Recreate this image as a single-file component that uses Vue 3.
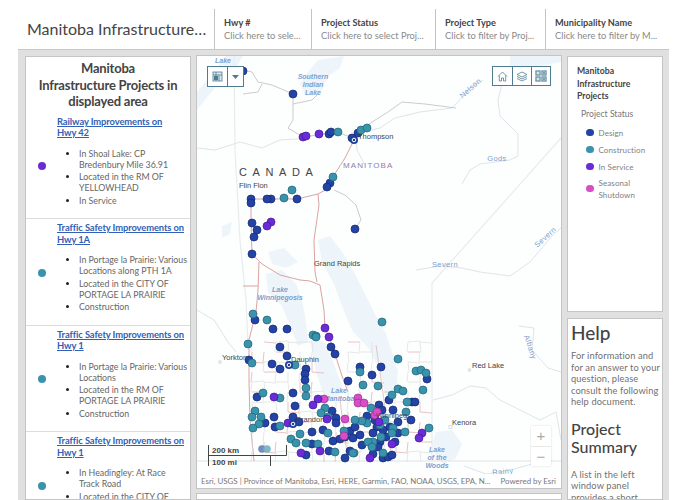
<template>
  <div class="page">
    <header class="topbar">
      <div class="app-title">Manitoba Infrastructure…</div>
      <div v-for="f in filters" :key="f.label" class="filter" :style="{ width: f.width + 'px' }">
        <div class="filter-label">{{ f.label }}</div>
        <div class="filter-hint">{{ f.hint }}</div>
      </div>
    </header>

    <main class="content">
      <aside class="list-panel">
        <h2 class="list-title">Manitoba<br />Infrastructure Projects in<br />displayed area</h2>
        <div v-for="(p, i) in projects" :key="i" class="project">
          <div class="project-dot-col">
            <span class="dot" :style="{ background: colors[p.status].fill }"></span>
          </div>
          <div class="project-body">
            <a class="project-link" href="#">{{ p.title }}</a>
            <ul class="project-facts">
              <li v-for="fact in p.facts" :key="fact">{{ fact }}</li>
            </ul>
          </div>
        </div>
      </aside>

      <section class="middle">
        <div class="map">
          <svg class="map-canvas" viewBox="197 56 364 432" width="364" height="432">
            <rect x="197" y="56" width="364" height="432" fill="#fdfefe" />

            <!-- water -->
            <g fill="#edf5fb">
              <path d="M226 56L243 56L236 68L222 80L208 96L197 110L197 92L212 74Z" />
              <path d="M318 60L344 56L340 68L328 76L322 90L306 96L300 84L308 72Z" />
              <path d="M510 56L561 56L561 62L540 66L510 66Z" />
              <path d="M318 240L330 236L342 252L354 272L366 296L377 318L386 334L392 352L398 372L396 394L386 398L380 372L370 350L352 330L342 306L334 284L322 262Z" />
              <path d="M266 274L282 270L296 284L302 300L306 322L308 342L298 346L290 326L282 306L268 292Z" />
              <path d="M268 252L284 248L298 262L286 268L272 264Z" />
              <path d="M310 338L324 342L334 364L342 386L336 402L324 396L316 372L312 352Z" />
              <path d="M436 432L452 430L462 444L456 458L444 464L436 456L432 444Z" />
              <path d="M222 226L232 222L230 234L222 238Z" />
            </g>

            <!-- province and state borders -->
            <g fill="none" stroke="#e8ecef" stroke-width="1.2">
              <path d="M234 56L235 150L240 240L246 300L248 345" />
              <path d="M561 138L497 210L432 283L432 461" />
              <path d="M197 461L561 461" stroke="#dfe3e6" />
            </g>

            <!-- rivers -->
            <g fill="none" stroke="#dde5ea" stroke-width="1">
              <path d="M483 80L470 88L458 102L452 108L420 112L395 118L380 128L362 132" />
              <path d="M503 80L498 100L500 116L518 134L518 156L510 160L480 164L470 170L462 184" />
              <path d="M197 148L215 150L240 142L262 148L280 140L310 138" />
              <path d="M416 270L440 266L462 268L480 272L510 276L530 262L552 236L561 228" />
              <path d="M519 326L534 328L532 350L548 368L561 372" />
              <path d="M433 400L452 395L470 386L486 388L500 400L520 410L540 420L556 412L561 440" />
              <path d="M464 466L486 474L510 470L540 462" />
              <path d="M197 310L214 320L228 342L236 352" />
              <path d="M365 165L357 150L356 135" />
            </g>

            <!-- northern roads -->
            <g fill="none" stroke="#c9c4c4" stroke-width="0.9">
              <path d="M243 70L252 72L258 82L272 85L293 94L293 120L288 128L298 134L303 137" />
              <path d="M243 94L258 92L262 84" />
              <path d="M293 104L312 100L318 94" />
              <path d="M303 137L338 132L352 138" />
              <path d="M354 136L372 122L388 112L402 102L425 104L456 108" />
              <path d="M334 190L345 195L356 205L361 220L355 229" />
            </g>

            <!-- highways -->
            <g fill="none" stroke="#dca3a3" stroke-width="1">
              <path d="M354 140L345 158L336 172L329 188L318 194L297 199L251 199L248 198" />
              <path d="M251 199L251 222L252 254L262 264L280 275L300 280L310 281L320 285L324 310L325 328L329 337L335 354L342 376L348 392" />
              <path d="M318 194L319 205L314 240L315 272L317 282" />
              <path d="M259 262L258 290L256 312L249 340L249 380L250 420L254 461" />
              <path d="M243 286L258 286" />
            </g>

            <path :d="grid.major" fill="none" stroke="#e6b5b5" stroke-width="0.8" />
            <path :d="grid.minor" fill="none" stroke="#dcdcdc" stroke-width="0.7" />

            <!-- labels -->
            <g class="water-label" text-anchor="middle">
              <text x="223" y="63">Lake</text>
              <text x="313" y="79">Southern</text>
              <text x="313" y="87">Indian</text>
              <text x="313" y="95">Lake</text>
              <text x="280" y="292">Lake</text>
              <text x="280" y="300">Winnipegosis</text>
              <text x="339" y="393">Lake</text>
              <text x="339" y="401">Manitoba</text>
              <text x="437" y="452">Lake</text>
              <text x="437" y="460">of the</text>
              <text x="437" y="468">Woods</text>
            </g>
            <g class="river-label" text-anchor="middle">
              <text transform="translate(472 90) rotate(-42)">Nelson</text>
              <text x="497" y="161">Gods</text>
              <text x="445" y="267">Severn</text>
              <text transform="translate(547 239) rotate(-42)">Severn</text>
              <text transform="translate(528 348) rotate(72)">Albany</text>
              <text transform="translate(503 474) rotate(-5)">Rainy</text>
            </g>
            <circle cx="220" cy="362" r="2" fill="#e4e4e4" />
            <circle cx="469.5" cy="370" r="2" fill="#e4e4e4" />
            <rect x="449" y="425.5" width="3" height="3" fill="none" stroke="#c8d4dc" stroke-width="0.7" />
            <text class="country-label" x="239" y="176">CANADA</text>
            <text class="province-label" x="343" y="168">MANITOBA</text>

            <!-- project points -->
            <circle
              v-for="(pt, i) in points"
              :key="i"
              :cx="pt.x"
              :cy="pt.y"
              r="4"
              :fill="colors[pt.status].fill"
              :stroke="colors[pt.status].stroke"
              stroke-width="0.7"
            />
            <g v-for="pt in ringed" :key="pt[0]" fill="none">
              <circle :cx="pt[0]" :cy="pt[1]" r="4" fill="#1f3f9c" />
              <circle :cx="pt[0]" :cy="pt[1]" r="1.8" stroke="#fff" stroke-width="1" />
            </g>
            <g opacity="0.65">
              <circle cx="262" cy="449" r="3.8" fill="#2f4fa6" />
              <circle cx="267" cy="449" r="3.8" fill="#3a96ad" />
            </g>

            <!-- city names sit above the points -->
            <g class="place-label">
              <text x="358" y="139">Thompson</text>
              <text x="239" y="188">Flin Flon</text>
              <text x="314" y="266">Grand Rapids</text>
              <text x="222" y="360">Yorkton</text>
              <text x="291" y="362">Dauphin</text>
              <text x="296" y="422">Brandon</text>
              <text x="376" y="418">Winnipeg</text>
              <text x="472" y="368">Red Lake</text>
              <text x="452" y="425">Kenora</text>
            </g>

            <!-- scale bar -->
            <g fill="none" stroke="#444" stroke-width="1">
              <path d="M208.5 445V466" />
              <path d="M208 455.5H286.5V445" />
              <path d="M270.5 455.5V466" />
            </g>
            <text class="scale-label" x="212" y="453">200 km</text>
            <text class="scale-label" x="212" y="465">100 mi</text>
          </svg>

          <div class="widget widget-left">
            <button class="widget-btn wide">
              <svg width="11" height="11" viewBox="0 0 11 11">
                <rect x="1" y="1" width="9" height="9" fill="#dbe7ee" stroke="#4f7d90" stroke-width="0.8" />
                <path d="M1 4H10M4 1V10M7 4V10" stroke="#4f7d90" stroke-width="0.8" />
                <rect x="2" y="5" width="4" height="4" fill="#4f7d90" />
              </svg>
            </button>
            <button class="widget-btn narrow">
              <svg width="7" height="4" viewBox="0 0 7 4"><path d="M0 0H7L3.5 4Z" fill="#4f7d90" /></svg>
            </button>
          </div>

          <div class="widget widget-right">
            <button class="widget-btn">
              <svg width="11" height="11" viewBox="0 0 11 11" fill="none" stroke="#4f7d90" stroke-width="0.8">
                <path d="M1 5.5L5.5 1L10 5.5M2.3 4.5V10H4.5V7H6.5V10H8.7V4.5" />
              </svg>
            </button>
            <button class="widget-btn">
              <svg width="12" height="11" viewBox="0 0 12 11" fill="none" stroke="#4f7d90" stroke-width="0.8">
                <path d="M6 1L11 3.5L6 6L1 3.5Z" />
                <path d="M1 5.5L6 8L11 5.5M1 7.5L6 10L11 7.5" />
              </svg>
            </button>
            <button class="widget-btn">
              <svg width="12" height="12" viewBox="0 0 12 12">
                <rect width="12" height="12" fill="#d3e4ec" />
                <g fill="none" stroke="#4f7d90" stroke-width="0.9">
                  <rect x="1" y="1" width="4" height="4" />
                  <rect x="7" y="1" width="4" height="4" />
                  <rect x="1" y="7" width="4" height="4" />
                  <rect x="7" y="7" width="4" height="4" />
                </g>
                <g fill="#4f7d90">
                  <rect x="8.2" y="2.2" width="1.6" height="1.6" />
                  <rect x="8.2" y="8.2" width="1.6" height="1.6" />
                </g>
              </svg>
            </button>
          </div>

          <div class="zoom">
            <button class="zoom-btn">+</button>
            <button class="zoom-btn">−</button>
          </div>

          <div class="attribution">
            <span>Esri, USGS | Province of Manitoba, Esri, HERE, Garmin, FAO, NOAA, USGS, EPA, N...</span>
            <span>Powered by Esri</span>
          </div>
        </div>
        <div class="below-map"></div>
      </section>

      <aside class="side">
        <div class="legend">
          <div class="legend-title">Manitoba Infrastructure Projects</div>
          <div class="legend-sub">Project Status</div>
          <div v-for="item in legend" :key="item.label" class="legend-row">
            <span class="legend-dot" :style="{ background: colors[item.status].fill }"></span>
            <span class="legend-label">{{ item.label }}</span>
          </div>
        </div>
        <div class="help">
          <h2>Help</h2>
          <p>For information and for an answer to your question, please consult the following help document.</p>
          <h2 class="summary">Project Summary</h2>
          <p>A list in the left window panel provides a short description of each project.</p>
        </div>
      </aside>
    </main>
  </div>
</template>

<script setup>
const colors = {
  d: { fill: '#2443a6', stroke: '#14286e' },
  c: { fill: '#3a93ad', stroke: '#1f6478' },
  i: { fill: '#6b2bd6', stroke: '#45199a' },
  s: { fill: '#d84ec8', stroke: '#9c3090' },
}

const filters = [
  { label: 'Hwy #', hint: 'Click here to sele...', width: 97 },
  { label: 'Project Status', hint: 'Click here to select Proj...', width: 124 },
  { label: 'Project Type', hint: 'Click to filter by Proj...', width: 110 },
  { label: 'Municipality Name', hint: 'Click here to filter by M...', width: 124 },
]

const projects = [
  {
    title: 'Railway Improvements on\nHwy 42',
    status: 'i',
    facts: ['In Shoal Lake: CP Bredenbury Mile 36.91', 'Located in the RM OF YELLOWHEAD', 'In Service'],
  },
  {
    title: 'Traffic Safety Improvements on\nHwy 1A',
    status: 'c',
    facts: ['In Portage la Prairie: Various Locations along PTH 1A', 'Located in the CITY OF PORTAGE LA PRAIRIE', 'Construction'],
  },
  {
    title: 'Traffic Safety Improvements on\nHwy 1',
    status: 'c',
    facts: ['In Portage la Prairie: Various Locations', 'Located in the RM OF PORTAGE LA PRAIRIE', 'Construction'],
  },
  {
    title: 'Traffic Safety Improvements on\nHwy 1',
    status: 'c',
    facts: ['In Headingley: At Race Track\u00a0Road', 'Located in the CITY OF WINNIPEG', 'Construction'],
  },
]

const legend = [
  { label: 'Design', status: 'd' },
  { label: 'Construction', status: 'c' },
  { label: 'In Service', status: 'i' },
  { label: 'Seasonal Shutdown', status: 's' },
]

// page coordinates read off the reference, grouped by status
const raw = {
  d: [
    [243, 71], [293, 94], [329, 134], [331, 132], [352, 138], [358, 133], [330, 183], [327, 187], [297, 199],
    [271, 199], [267, 199], [251, 199], [251, 203], [252, 223], [257, 230], [254, 237], [252, 254], [355, 229],
    [255, 320], [273, 329], [287, 329], [280, 347], [331, 347], [335, 354], [249, 360], [272, 364], [287, 356],
    [280, 369], [306, 369], [305, 374], [305, 380], [348, 381], [360, 367], [381, 367], [372, 375], [257, 397],
    [293, 393], [295, 406], [332, 411], [274, 417], [265, 423], [275, 427], [293, 417], [299, 422], [336, 418],
    [336, 423], [323, 430], [312, 432], [350, 431], [333, 441], [340, 439], [345, 437], [353, 438], [360, 435],
    [362, 445], [312, 444], [306, 455], [329, 451], [350, 451], [345, 458], [427, 379], [379, 405], [393, 410],
    [389, 400], [382, 410], [367, 416], [412, 402], [415, 402], [411, 420], [355, 427], [390, 427], [398, 422],
    [398, 433], [383, 430], [377, 427], [373, 433], [380, 442], [378, 447], [395, 442], [373, 454], [383, 458],
    [388, 457], [392, 455], [386, 437], [375, 420],
  ],
  c: [
    [338, 132], [361, 130], [367, 128], [333, 177], [292, 190], [284, 198], [253, 314], [267, 320], [248, 344],
    [313, 335], [316, 336], [316, 337], [382, 322], [252, 363], [295, 365], [360, 372], [363, 385], [378, 386],
    [263, 393], [280, 398], [306, 388], [306, 396], [255, 411], [252, 417], [261, 417], [259, 424], [253, 428],
    [280, 426], [325, 408], [321, 413], [328, 417], [328, 433], [344, 431], [300, 434], [291, 439], [296, 443],
    [306, 443], [318, 444], [335, 452], [354, 453], [398, 359], [416, 371], [421, 370], [426, 373], [423, 390],
    [398, 389], [403, 391], [392, 395], [406, 412], [407, 402], [429, 428], [405, 432], [371, 408], [367, 423],
    [362, 421], [355, 420], [373, 442], [368, 442], [372, 447], [381, 437], [383, 453], [393, 428], [392, 433],
    [353, 453], [380, 425], [385, 420],
  ],
  s: [
    [324, 399], [358, 398], [358, 403], [364, 403], [345, 419], [344, 436], [375, 415], [377, 412],
  ],
  i: [
    [303, 137], [306, 136], [319, 134], [271, 222], [267, 226], [325, 328], [329, 337], [274, 397], [318, 399],
    [313, 405], [288, 423], [327, 419], [301, 453], [320, 451], [370, 458], [379, 422], [422, 433], [419, 438],
    [392, 444],
  ],
}

const points = ['d', 'c', 's', 'i'].flatMap((status) =>
  raw[status].map(([x, y]) => ({ x, y, status })),
)

const ringed = [
  [354, 140],
  [289, 365],
  [293, 424],
]

// southern Manitoba road grid, a fixed pattern rather than real roads
function buildGrid() {
  let major = ''
  let minor = ''
  for (let x = 252; x < 432; x += 12) {
    for (let y = 342; y < 460; y += 10) {
      if (x > 312 && x < 340 && y < 400) continue
      if (x > 376 && x < 400 && y < 392) continue
      const k = (x * 7 + y * 13) % 11
      const seg = `M${x} ${y}L${x + (k % 3) - 1} ${y + 10}`
      const bar = `M${x} ${y}L${x + 12} ${y + (k % 3) - 1}`
      if (k === 0 || k === 4) major += seg
      else if (k === 2 || k === 7) major += bar
      else if (k === 5 || k === 9) minor += seg + bar
      else if (k === 1) minor += bar
      else minor += seg
    }
  }
  major += 'M376 345L384 400L392 461M340 400L348 461'
  return { major, minor }
}

const grid = buildGrid()
</script>

<style>
html,
body {
  margin: 0;
  height: 500px;
  overflow: hidden;
  background: #fff;
}
</style>

<style scoped>
.page {
  width: 651px;
  height: 500px;
  margin-left: 18px;
  display: flex;
  flex-direction: column;
  font-family: Lato, "Liberation Sans", sans-serif;
  color: #555;
  overflow: hidden;
}

.topbar {
  height: 49px;
  flex: none;
  box-sizing: border-box;
  padding-top: 9px;
  display: flex;
  background: #fff;
}

.app-title {
  width: 196px;
  flex: none;
  box-sizing: border-box;
  padding: 10px 0 0 9px;
  font-size: 16px;
  color: #444;
  white-space: nowrap;
}

.filter {
  flex: none;
  box-sizing: border-box;
  border-left: 1px solid #c4c4c4;
  padding: 7px 0 0 9px;
  white-space: nowrap;
  overflow: hidden;
}

.filter-label {
  font-size: 9.2px;
  font-weight: 700;
  line-height: 13px;
  color: #444;
}

.filter-hint {
  font-size: 9.3px;
  line-height: 14px;
  color: #8a8a8a;
}

.content {
  flex: 1;
  min-height: 0;
  display: flex;
  gap: 6px;
  padding: 6px 6px 0 7px;
  background: #e0e0e0;
  border-top: 1px solid #c8c8c8;
}

.list-panel {
  width: 166px;
  flex: none;
  box-sizing: border-box;
  background: #fff;
  border: 1px solid #c4c4c4;
  overflow: hidden;
}

.list-title {
  margin: 0;
  padding: 3px 0;
  font-size: 13px;
  letter-spacing: -0.2px;
  line-height: 16.5px;
  font-weight: 700;
  text-align: center;
  color: #444;
}

.project {
  height: 106.5px;
  box-sizing: border-box;
  display: flex;
  border-bottom: 1px solid #dcdcdc;
  overflow: hidden;
}

.project-dot-col {
  width: 31px;
  flex: none;
  display: flex;
  align-items: center;
  justify-content: center;
}

.dot {
  width: 8px;
  height: 8px;
  border-radius: 50%;
  margin-top: 2px;
  margin-left: 1px;
}

.project-body {
  flex: 1;
  padding-top: 3px;
  min-width: 0;
}

.project-link {
  display: block;
  font-size: 9.4px;
  letter-spacing: -0.1px;
  line-height: 11.5px;
  font-weight: 700;
  color: #3160b4;
  text-decoration: underline;
  white-space: pre-line;
}

.project-facts {
  margin: 9px 0 0;
  padding: 0 0 0 22px;
  font-size: 8.8px;
  line-height: 11px;
  color: #666;
}

.project-facts li {
  margin-bottom: 1.5px;
}

.project-facts li::marker {
  color: #222;
}

.middle {
  width: 364px;
  flex: none;
  display: flex;
  flex-direction: column;
  gap: 5px;
}

.map {
  position: relative;
  height: 432px;
  flex: none;
  border: 1px solid #c4c4c4;
  box-sizing: content-box;
  margin: -1px;
  overflow: hidden;
}

.map-canvas {
  display: block;
}

.water-label {
  font: italic 700 7px "Liberation Sans", sans-serif;
  fill: #7e9fcf;
}

.river-label {
  font: 7.5px "Liberation Sans", sans-serif;
  letter-spacing: 0.4px;
  fill: #7e9fcf;
}

.place-label {
  font: 7.5px "Liberation Sans", sans-serif;
  fill: #444;
}

.country-label {
  font: 11px "Liberation Sans", sans-serif;
  letter-spacing: 5.6px;
  fill: #444;
}

.province-label {
  font: 8px "Liberation Sans", sans-serif;
  letter-spacing: 1.1px;
  fill: #8d7fb0;
}

.scale-label {
  font: 700 8px "Liberation Sans", sans-serif;
  fill: #444;
}

.widget {
  position: absolute;
  top: 10px;
  display: flex;
  background: #fff;
  border: 1px solid #4f7d90;
}

.widget-left {
  left: 10px;
  height: 19px;
}

.widget-right {
  right: 10px;
  height: 18px;
}

.widget-btn {
  width: 19px;
  padding: 0;
  border: none;
  background: none;
  display: flex;
  align-items: center;
  justify-content: center;
}

.widget-btn + .widget-btn {
  border-left: 1px solid #4f7d90;
}

.widget-btn.narrow {
  width: 16px;
}

.zoom {
  position: absolute;
  right: 10px;
  top: 370px;
  width: 20px;
  display: flex;
  flex-direction: column;
  background: #fff;
  box-shadow: 0 0 2px rgba(0, 0, 0, 0.15);
}

.zoom-btn {
  height: 20px;
  padding: 0;
  border: none;
  background: #fff;
  font: 300 15px/20px "Liberation Sans", sans-serif;
  color: #aaa;
}

.zoom-btn + .zoom-btn {
  border-top: 1px solid #e8e8e8;
}

.attribution {
  position: absolute;
  left: 0;
  right: 0;
  bottom: 0;
  height: 14px;
  box-sizing: border-box;
  padding: 0 5px 0 4px;
  display: flex;
  justify-content: space-between;
  align-items: center;
  background: rgba(255, 255, 255, 0.85);
  font-size: 7.9px;
  color: #777;
  white-space: nowrap;
}

.below-map {
  flex: 1;
  background: #fff;
  border: 1px solid #c4c4c4;
  margin: 0 -1px;
}

.side {
  width: 96px;
  flex: none;
  display: flex;
  flex-direction: column;
  gap: 6px;
}

.legend {
  height: 256px;
  flex: none;
  box-sizing: border-box;
  padding: 8px 8px 0 9px;
  background: #fff;
  border: 1px solid #c4c4c4;
}

.legend-title {
  font-size: 8.7px;
  font-weight: 700;
  line-height: 12.7px;
  color: #444;
}

.legend-sub {
  margin: 5px 0 3px 4px;
  font-size: 8.6px;
  line-height: 13px;
  color: #777;
}

.legend-row {
  display: flex;
  align-items: center;
  gap: 5px;
  min-height: 17px;
  padding-left: 9px;
}

.legend-row:last-child {
  margin-top: 1.5px;
}

.legend-dot {
  width: 7.5px;
  height: 7.5px;
  flex: none;
  border-radius: 50%;
}

.legend-label {
  font-size: 8px;
  letter-spacing: 0.1px;
  line-height: 12px;
  color: #808080;
}

.help {
  flex: 1;
  box-sizing: border-box;
  padding: 1px 1px 0 3px;
  background: #fff;
  border: 1px solid #c4c4c4;
  overflow: hidden;
}

.help h2 {
  margin: 0;
  font-size: 19px;
  line-height: 25px;
  font-weight: 500;
  color: #444;
}

.help h2.summary {
  margin-top: 12px;
  font-size: 16px;
  line-height: 18.5px;
}

.help p {
  margin: 5px 0 0;
  font-size: 9.3px;
  letter-spacing: 0.1px;
  line-height: 11.5px;
  color: #707070;
}

.help .summary + p {
  margin-top: 12px;
}
</style>
